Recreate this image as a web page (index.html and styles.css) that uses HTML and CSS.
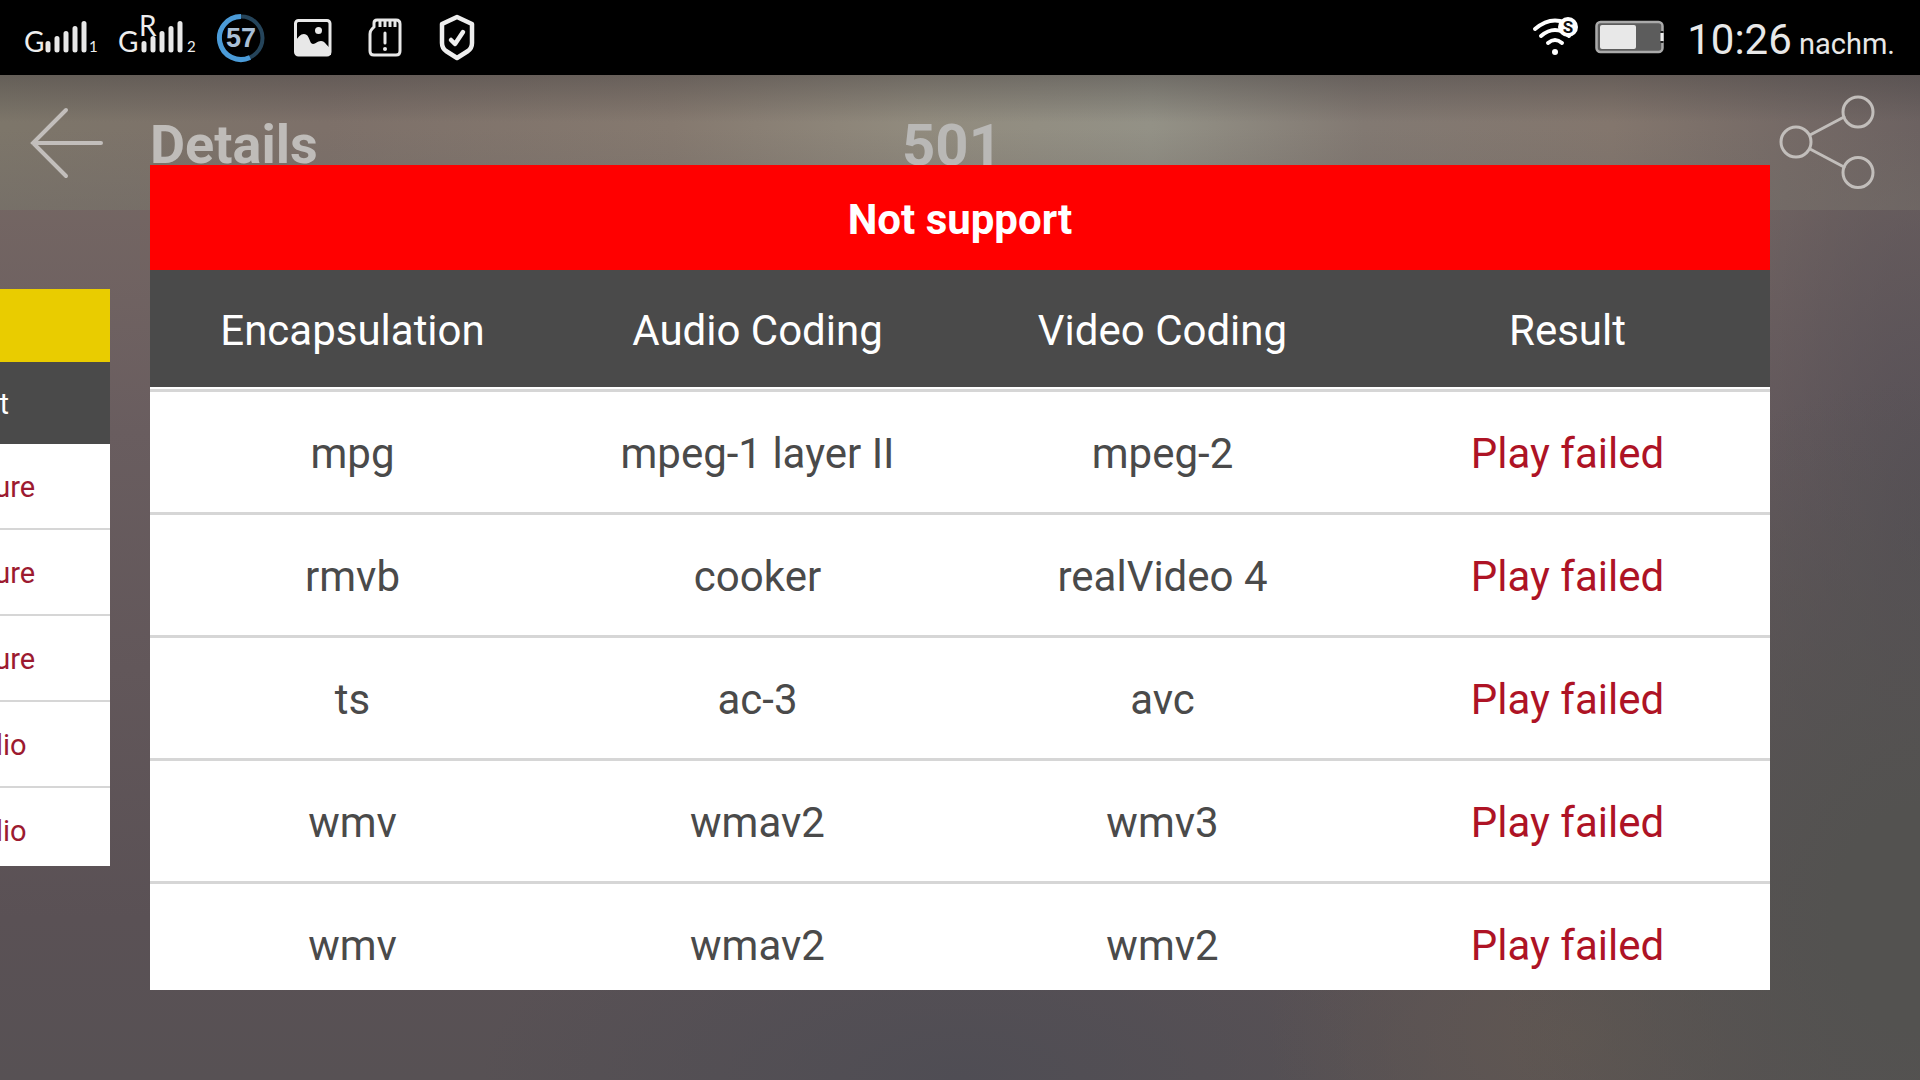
FILE: index.html
```html
<!DOCTYPE html>
<html lang="en">
<head>
<meta charset="utf-8">
<meta name="viewport" content="width=device-width, initial-scale=1">
<title>Details</title>
<link rel="stylesheet" href="styles.css">
</head>
<body>
<div class="status">
  <div class="status-group">
    <svg width="76" height="75" viewBox="0 0 76 75" aria-label="Signal 1">
      <g class="bars"><path d="M24 43.500V50M33 38.500V50M42 33.500V50M51 28.500V50M60 23.500V50"/></g>
      <text class="net" x="0" y="52">G</text><text class="sim" x="65" y="52">1</text>
    </svg>
    <svg width="84" height="75" viewBox="0 0 84 75" aria-label="Signal 2">
      <g class="bars"><path d="M28 43.500V50M37 38.500V50M46 33.500V50M55 28.500V50M64 23.500V50"/></g>
      <text class="net" x="2" y="52">G</text><text class="net" x="23" y="36">R</text><text class="sim" x="71" y="52">2</text>
    </svg>
    <svg width="50" height="75" viewBox="0 0 50 75" aria-label="57 percent">
      <circle cx="25" cy="38" r="21.500" fill="none" stroke="#25445a" stroke-width="4"/>
      <path d="M25 16.500A21.500 21.500 0 1 0 34 57.500" fill="none" stroke="#4b9bd8" stroke-width="5"/>
      <text class="level" x="25" y="47" text-anchor="middle">57</text>
    </svg>
    <svg width="62" height="75" viewBox="0 0 62 75" aria-label="Picture">
      <rect x="13.500" y="20.500" width="34.500" height="34.500" rx="3" fill="none" stroke="#e8e8e8" stroke-width="3"/>
      <circle cx="36.500" cy="30.500" r="3.500" fill="#e8e8e8"/>
      <path d="M13 41C17 37 18 34 22 34C28 34 27 44 31 44C34 44 35 41 39 41C43 41 45 46 49 49V55H13Z" fill="#e8e8e8"/>
    </svg>
    <svg width="48" height="75" viewBox="0 0 48 75" aria-label="Memory card">
      <path d="M17 20H36Q40 20 40 24V51Q40 55 36 55H14Q10 55 10 51V34Q10 31 12 29L14 27V23Q14 20 17 20Z" fill="none" stroke="#e8e8e8" stroke-width="3"/>
      <path d="M20 20V27M25 20V27M30 20V27M35 20V27" stroke="#e8e8e8" stroke-width="3"/>
      <path d="M25 33V43" stroke="#e8e8e8" stroke-width="3" stroke-linecap="round"/><circle cx="25" cy="49" r="2" fill="#e8e8e8"/>
    </svg>
    <svg width="66" height="75" viewBox="0 0 66 75" aria-label="Protected">
      <path d="M33 17L48 24V43Q48 48 44 51L33 58L22 51Q18 48 18 43V24Z" fill="none" stroke="#eee" stroke-width="4.500" stroke-linejoin="round"/>
      <path d="M27 40L31 44L39 32" fill="none" stroke="#eee" stroke-width="4.500" stroke-linecap="round" stroke-linejoin="round"/>
    </svg>
  </div>
  <div class="status-group status-right">
    <svg width="48" height="75" viewBox="0 0 48 75" aria-label="Wi-Fi">
      <g fill="none" stroke="#fff" stroke-width="4" stroke-linecap="round"><path d="M3 29Q23 12 43 29M9 36Q23 24 37 36M16 43Q23 37 30 43"/></g>
      <circle cx="23" cy="52" r="3" fill="#fff"/>
      <circle cx="36" cy="27" r="10" fill="#fff"/>
      <text class="wifi-mark" x="36" y="33" text-anchor="middle">S</text>
    </svg>
    <svg width="70" height="75" viewBox="0 0 70 75" aria-label="Battery">
      <rect x="1.500" y="22" width="66" height="30" rx="4" fill="#5c5c5c" stroke="#aaa" stroke-width="2.500"/>
      <rect x="5" y="25" width="36" height="24" rx="2" fill="#e8e8e8"/>
      <path d="M67 33V41" stroke="#eee" stroke-width="3"/><path d="M67 31V33M67 41V43" stroke="#222" stroke-width="3"/>
    </svg>
    <div class="clock">10:26<small> nachm.</small></div>
  </div>
</div>

<header class="appbar">
  <button class="icon-button back" type="button" aria-label="Back">
    <svg width="78" height="76" viewBox="0 0 78 76"><path d="M38 5L5 38L38 71M5 38H73" /></svg>
  </button>
  <h1 class="title">Details</h1>
  <div class="score">501</div>
  <button class="icon-button share" type="button" aria-label="Share">
    <svg width="100" height="100" viewBox="0 0 100 100"><circle cx="20" cy="49" r="15"/><circle cx="82" cy="19" r="15"/><circle cx="82" cy="79.500" r="15"/><path d="M34 42L68 24M34 56L68 74"/></svg>
  </button>
</header>

<main class="carousel">
  <section class="card side">
    <table>
      <caption class="partial">&nbsp;</caption>
      <thead><tr><th scope="col">Result</th></tr></thead>
      <tbody>
        <tr><td class="bad">No picture</td></tr>
        <tr><td class="bad">No picture</td></tr>
        <tr><td class="bad">No picture</td></tr>
        <tr><td class="bad">No audio</td></tr>
        <tr><td class="bad">No audio</td></tr>
      </tbody>
    </table>
  </section>
  <section class="card current">
    <table>
      <caption>Not support</caption>
      <thead><tr><th scope="col">Encapsulation</th><th scope="col">Audio Coding</th><th scope="col">Video Coding</th><th scope="col">Result</th></tr></thead>
      <tbody>
        <tr><td>mpg</td><td>mpeg-1 layer II</td><td>mpeg-2</td><td class="bad">Play failed</td></tr>
        <tr><td>rmvb</td><td>cooker</td><td>realVideo 4</td><td class="bad">Play failed</td></tr>
        <tr><td>ts</td><td>ac-3</td><td>avc</td><td class="bad">Play failed</td></tr>
        <tr><td>wmv</td><td>wmav2</td><td>wmv3</td><td class="bad">Play failed</td></tr>
        <tr><td>wmv</td><td>wmav2</td><td>wmv2</td><td class="bad">Play failed</td></tr>
      </tbody>
    </table>
  </section>
</main>
</body>
</html>
```
FILE: styles.css
```css
* { box-sizing: border-box; }

body {
  margin: 0;
  min-height: 100vh;
  overflow: hidden;
  font-family: Roboto, "Liberation Sans", sans-serif;
  background:
    radial-gradient(ellipse 22% 50% at 100% 85%, #535250 20%, transparent),
    radial-gradient(ellipse 16% 20% at 82% 96%, #605752, transparent),
    radial-gradient(ellipse 25% 20% at 50% 100%, #4f4d54, transparent),
    radial-gradient(ellipse 12% 60% at 100% 50%, #565056, transparent),
    linear-gradient(#746663 18%, #695d5f 40%, #62575a 62%, #5a5155 85%, #575154);
}

.status {
  display: flex;
  justify-content: space-between;
  height: 75px;
  padding: 0 25px 0 24px;
  background: #000;
  color: #e8e8e8;
}
.status-group { display: flex; gap: 16px; }
.status-right { gap: 15px; }
.status svg { display: block; }
.bars { fill: none; stroke: #e8e8e8; stroke-width: 5px; stroke-linecap: round; }
.net { font: 400 28px Lato, sans-serif; fill: #eee; }
.sim { font: 400 15px Lato, sans-serif; fill: #eee; }
.level { font: 700 27px "Liberation Sans", sans-serif; fill: #a9bfd6; }
.wifi-mark { font: 700 17px Roboto, sans-serif; fill: #111; }
.clock { padding-left: 7px; font-size: 42px; line-height: 79px; white-space: nowrap; }
.clock small { font-size: 29px; }

.appbar {
  display: grid;
  grid-template-columns: 150px 1fr auto 1fr 166px;
  align-items: center;
  height: 135px;
  color: #bfbcb9;
  background:
    linear-gradient(rgba(70, 66, 66, .45), transparent 35%),
    linear-gradient(transparent 40%, rgba(112, 106, 102, .5)),
    linear-gradient(90deg, #7d766a, #7d7069 17%, #85796f 35%, #918b7e 48%, #939186 60%, #827972 71%, #83766d 84%, #756a66 93%, #6c6261);
}
.icon-button {
  display: flex;
  padding: 0;
  border: 0;
  background: none;
  color: inherit;
}
.icon-button svg { fill: none; stroke: #c2bebb; stroke-width: 4px; stroke-linecap: round; }
.back { padding-left: 28px; }
.share { grid-column: 5; padding-left: 22px; }
.share svg { stroke-width: 3px; }
.title, .score { margin: 0; padding-top: 4px; font-weight: 700; line-height: 64px; }
.title { font-size: 54px; }
.score { font-size: 58px; color: #b9b8b6; }

.carousel {
  --card-height: calc(100vh - 255px);
  position: relative;
  display: flex;
  align-items: center;
  gap: 40px;
  margin: -45px 150px 0 -173px;
}
.card { overflow: hidden; background: #fff; }
.current { flex: 1; height: var(--card-height); }
.side { width: 283px; height: calc(var(--card-height) * .7); }

table { width: 100%; table-layout: fixed; border-collapse: separate; border-spacing: 0; }
caption { background: #f00; color: #fff; font-weight: 700; }
th, td { padding: 4px 0 0; text-align: center; font-weight: 400; }
th { background: #4a4a4a; background-clip: padding-box; color: #fff; }
td { color: #4a4a4a; }
.bad { color: #ae1325; }

.current table { font-size: 42px; line-height: 50px; }
.current caption { height: 105px; padding-top: 4px; line-height: 101px; }
.current th { height: 119px; border-bottom: 2px solid #fff; }
.current td { height: 123px; border-top: 3px solid #d6d6d6; }

.side table { font-size: 29px; line-height: 35px; }
.side .partial { height: 73px; background: #e9cc00; }
.side th { height: 82px; }
.side td { height: 86px; border-bottom: 2px solid #d6d6d6; }
.side .bad { color: #9c1a30; }
```
